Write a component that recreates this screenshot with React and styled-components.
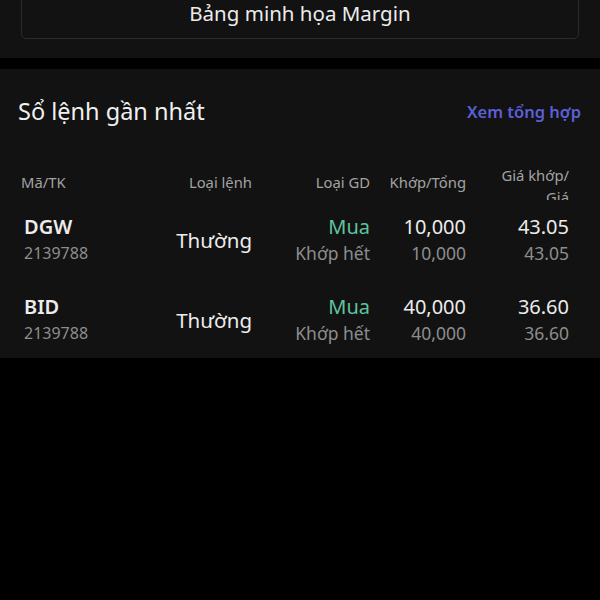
import React from "react";
import styled, { createGlobalStyle } from "styled-components";

const Global = createGlobalStyle`
  html, body { margin: 0; padding: 0; background: #000; }
  body { font-family: "Noto Sans", "Lato", sans-serif; color: #e9e9e9; }
  * { box-sizing: border-box; }
`;

const Page = styled.div`
  width: 600px;
  height: 600px;
  background: #000;
  overflow: hidden;
  display: flex;
  flex-direction: column;
`;

const TopPanel = styled.div`
  height: 58px;
  background: #121212;
  padding: 0 21px;
  overflow: hidden;
`;

const MarginButton = styled.div`
  margin-top: -14px;
  height: 53px;
  border: 1.5px solid #2a2a2a;
  border-radius: 5px;
  display: flex;
  align-items: center;
  justify-content: center;
  padding-top: 1px;
  font-size: 20.5px;
  color: #ececec;
`;

const Gap = styled.div`
  height: 11px;
  background: #000;
`;

const Panel = styled.div`
  background: #121212;
  padding: 27px 0 0;
  height: 289px;
  overflow: hidden;
`;

const TitleRow = styled.div`
  display: flex;
  justify-content: space-between;
  align-items: center;
  padding: 0 19px 0 18px;
  height: 30px;
`;

const Title = styled.div`
  font-size: 23.5px;
  color: #f0f0f0;
`;

const Link = styled.div`
  font-size: 16.5px;
  font-weight: 600;
  color: #5a5fd6;
`;

const Grid = styled.div`
  display: grid;
  grid-template-columns: 1fr 110px 118px 96px 103px;
  padding: 0 31px 0 21px;
`;

const HeadRow = styled(Grid)`
  margin-top: 38px;
  height: 36px;
`;

const HeadCell = styled.div`
  font-size: 14.8px;
  color: #a3a3a3;
  line-height: ${(p) => (p.$multi ? "22px" : "36px")};
  height: 36px;
  overflow: hidden;
  white-space: nowrap;
  text-align: ${(p) => (p.$left ? "left" : "right")};
`;

const Row = styled(Grid)`
  height: 80px;
  padding-top: 14px;
  align-items: start;
`;

const Cell = styled.div`
  display: flex;
  flex-direction: column;
  align-items: ${(p) => (p.$left ? "flex-start" : "flex-end")};
  align-self: ${(p) => (p.$center ? "center" : "start")};
  margin-top: ${(p) => (p.$center ? "-14px" : "0")};
  padding-left: ${(p) => (p.$left ? "3px" : "0")};
`;

const Primary = styled.div`
  line-height: 26px;
  font-size: ${(p) => (p.$big ? "20.5px" : "20px")};
  font-weight: ${(p) => (p.$bold ? 600 : 400)};
  color: ${(p) => p.$color || "#ececec"};
`;

const Secondary = styled.div`
  line-height: 26px;
  font-size: ${(p) => (p.$small ? "16px" : "17.5px")};
  color: #8d8d8d;
`;

const orders = [
  { code: "DGW", acc: "2139788", qty: "10,000", price: "43.05" },
  { code: "BID", acc: "2139788", qty: "40,000", price: "36.60" },
];

export default function App() {
  return (
    <>
      <Global />
      <Page>
        <TopPanel>
          <MarginButton>Bảng minh họa Margin</MarginButton>
        </TopPanel>
        <Gap />
        <Panel>
          <TitleRow>
            <Title>Sổ lệnh gần nhất</Title>
            <Link>Xem tổng hợp</Link>
          </TitleRow>
          <HeadRow>
            <HeadCell $left>Mã/TK</HeadCell>
            <HeadCell>Loại lệnh</HeadCell>
            <HeadCell>Loại GD</HeadCell>
            <HeadCell>Khớp/Tổng</HeadCell>
            <HeadCell $multi>
              Giá khớp/
              <br />
              Giá
            </HeadCell>
          </HeadRow>
          {orders.map((o) => (
            <Row key={o.code}>
              <Cell $left>
                <Primary $bold>{o.code}</Primary>
                <Secondary $small>{o.acc}</Secondary>
              </Cell>
              <Cell $center>
                <Primary $big>Thường</Primary>
              </Cell>
              <Cell>
                <Primary $color="#5ec49c">Mua</Primary>
                <Secondary>Khớp hết</Secondary>
              </Cell>
              <Cell>
                <Primary>{o.qty}</Primary>
                <Secondary>{o.qty}</Secondary>
              </Cell>
              <Cell>
                <Primary>{o.price}</Primary>
                <Secondary>{o.price}</Secondary>
              </Cell>
            </Row>
          ))}
        </Panel>
      </Page>
    </>
  );
}
